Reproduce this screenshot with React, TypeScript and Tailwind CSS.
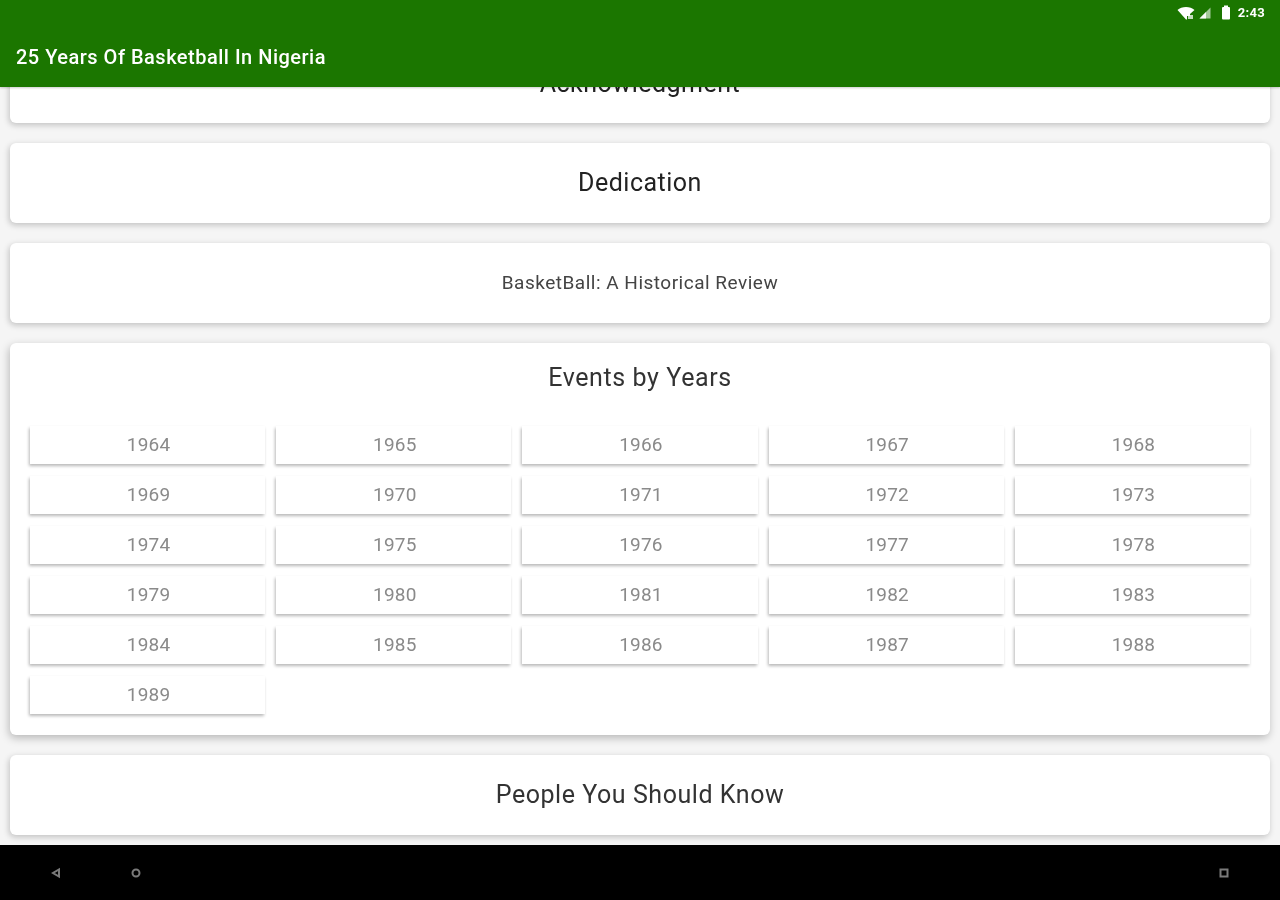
const YEARS = Array.from({ length: 26 }, (_, i) => 1964 + i);

function StatusBar() {
  return (
    <div className="flex h-[25px] items-center justify-end gap-[4px] pr-[15px]">
      <svg width="18" height="14" viewBox="0 0 18 14" className="text-white">
        <path d="M0.5 4 C4.5 0 13.5 0 17.5 4 L13 8 L13 10 H10 V13.5 H9 Z" fill="currentColor" />
        <rect x="11" y="9" width="5" height="4" fill="currentColor" opacity="0.75" />
      </svg>
      <svg width="12" height="12" viewBox="0 0 12 12">
        <path d="M0.5 11.5 L11.5 0.5 V11.5 Z" fill="#ffffff" opacity="0.6" />
        <path d="M0.5 11.5 L7 5 V11.5 Z" fill="#ffffff" opacity="0.9" />
      </svg>
      <svg width="10" height="15" viewBox="0 0 10 15" className="ml-[6px]">
        <rect x="3" y="0.5" width="4" height="2" fill="#ffffff" />
        <rect x="1" y="2" width="8" height="12.5" rx="1" fill="#ffffff" />
      </svg>
      <span className="ml-[3px] text-[13px] font-bold leading-none tracking-[0.3px] text-white">2:43</span>
    </div>
  );
}

function Card({ children, className }: { children: React.ReactNode; className: string }) {
  return (
    <div className={`flex h-[80px] shrink-0 items-center justify-center rounded-[6px] bg-white shadow-[-1px_2px_6px_rgba(0,0,0,0.22)] ${className}`}>
      {children}
    </div>
  );
}

export default function App() {
  return (
    <div className="flex h-[900px] w-[1280px] flex-col overflow-hidden bg-[#f5f5f5] font-['Roboto',sans-serif] blur-[0.6px]">
      <header className="relative z-10 h-[87px] shrink-0 bg-[#1b7600] shadow-[0_1px_2px_rgba(0,0,0,0.2)]">
        <StatusBar />
        <h1 className="pl-4 pt-[18px] text-[20px] font-medium leading-[28px] tracking-[0.5px] text-white">
          25 Years Of Basketball In Nigeria
        </h1>
      </header>

      <main className="flex min-h-0 flex-1 flex-col gap-5 overflow-hidden px-[10px]">
        <Card className="-mt-[44px] pt-[2px] text-[25px] tracking-[0.5px] text-[#222222]">Acknowledgment</Card>
        <Card className="text-[25px] tracking-[0.5px] text-[#222222]">Dedication</Card>
        <Card className="text-[19px] tracking-[0.5px] text-[#444444]">BasketBall: A Historical Review</Card>

        <section className="h-[392px] shrink-0 rounded-[6px] bg-white px-5 pt-[18px] shadow-[-1px_3px_8px_rgba(0,0,0,0.25)]">
          <h2 className="text-center text-[25px] leading-[34px] tracking-[0.6px] text-[#333333]">Events by Years</h2>
          <div className="mt-[31px] grid grid-cols-5 gap-x-[11px] gap-y-3">
            {YEARS.map((year) => (
              <button
                key={year}
                className="flex h-[38px] items-center justify-center bg-white pl-[2px] text-[19px] tracking-[0.2px] text-[#8a8a8a] shadow-[-1px_2px_3px_rgba(0,0,0,0.28)]"
              >
                {year}
              </button>
            ))}
          </div>
        </section>

        <Card className="text-[25px] tracking-[0.55px] text-[#333333]">People You Should Know</Card>
      </main>

      <footer className="relative z-10 flex h-[55px] shrink-0 items-center bg-black text-[#7a7a7a]">
        <svg width="10" height="12" viewBox="0 0 10 12" className="ml-[51px]">
          <path d="M8 2.5 V9.5 L2 6 Z" fill="none" stroke="currentColor" strokeWidth="2" />
        </svg>
        <svg width="10" height="10" viewBox="0 0 10 10" className="ml-[70px]">
          <circle cx="5" cy="5" r="3.5" fill="none" stroke="currentColor" strokeWidth="2" />
        </svg>
        <svg width="10" height="10" viewBox="0 0 10 10" className="ml-auto mr-[51px]">
          <rect x="1.5" y="1.5" width="7" height="7" fill="none" stroke="currentColor" strokeWidth="2" />
        </svg>
      </footer>
    </div>
  );
}
